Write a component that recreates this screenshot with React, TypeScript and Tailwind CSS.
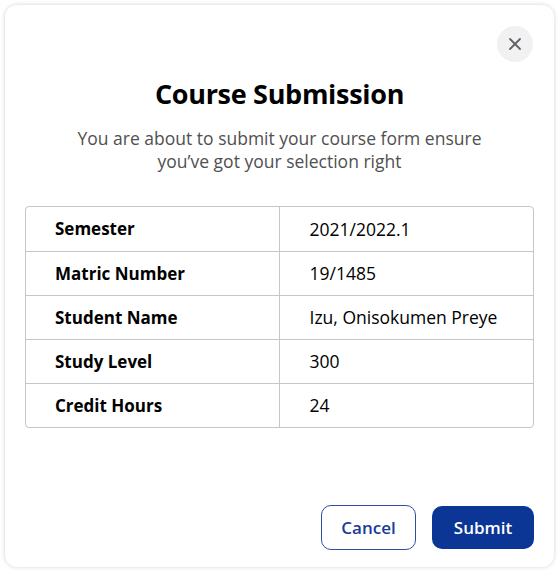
import { X } from 'lucide-react';

const rows = [
  { label: 'Semester', value: '2021/2022.1' },
  { label: 'Matric Number', value: '19/1485' },
  { label: 'Student Name', value: 'Izu, Onisokumen Preye' },
  { label: 'Study Level', value: '300' },
  { label: 'Credit Hours', value: '24' },
];

export default function App() {
  return (
    <div className="w-[560px] h-[571px] bg-white pt-[5px] pl-[5px] font-['Open_Sans',sans-serif]">
      <div className="relative w-[549px] h-[562px] bg-white rounded-xl shadow-[0_0_4px_rgba(0,0,0,0.18)] flex flex-col px-5 pt-[71px] pb-[17px]">
        {/* Close */}
        <button className="absolute top-[21px] right-[21px] w-9 h-9 rounded-full bg-[#f1f1f2] flex items-center justify-center text-[#5f6368]">
          <X className="w-5 h-5" strokeWidth={2.2} />
        </button>

        <h2 className="text-center text-[27px] leading-9 font-bold text-black tracking-[-0.3px]">
          Course Submission
        </h2>
        <p className="mt-[15px] mx-auto max-w-[440px] text-center text-[17.5px] leading-[23px] text-[#505050]">
          You are about to submit your course form ensure you’ve got your selection right
        </p>

        {/* Summary table */}
        <div className="mt-[33px] border-[1.5px] border-[#c3c7cc] rounded-[4px] overflow-hidden">
          {rows.map((row, idx) => (
            <div
              key={row.label}
              className={`grid grid-cols-2 h-11 ${idx > 0 ? 'border-t-[1.5px] border-[#c3c7cc]' : ''}`}
            >
              <div className="flex items-center pl-[29px] text-[17px] font-bold text-black border-r-[1.5px] border-[#c3c7cc]">
                {row.label}
              </div>
              <div className="flex items-center pl-[30px] text-[17.5px] text-black">
                {row.value}
              </div>
            </div>
          ))}
        </div>

        {/* Actions */}
        <div className="mt-auto flex justify-end gap-4">
          <button className="w-[95px] h-[45px] rounded-[10px] border-[1.5px] border-[#2e4fa3] text-[#1a3c97] text-[17px] font-semibold">
            Cancel
          </button>
          <button className="w-[102px] h-[43px] mt-px rounded-[10px] bg-[#0b3696] text-white text-[17px] font-semibold">
            Submit
          </button>
        </div>
      </div>
    </div>
  );
}
